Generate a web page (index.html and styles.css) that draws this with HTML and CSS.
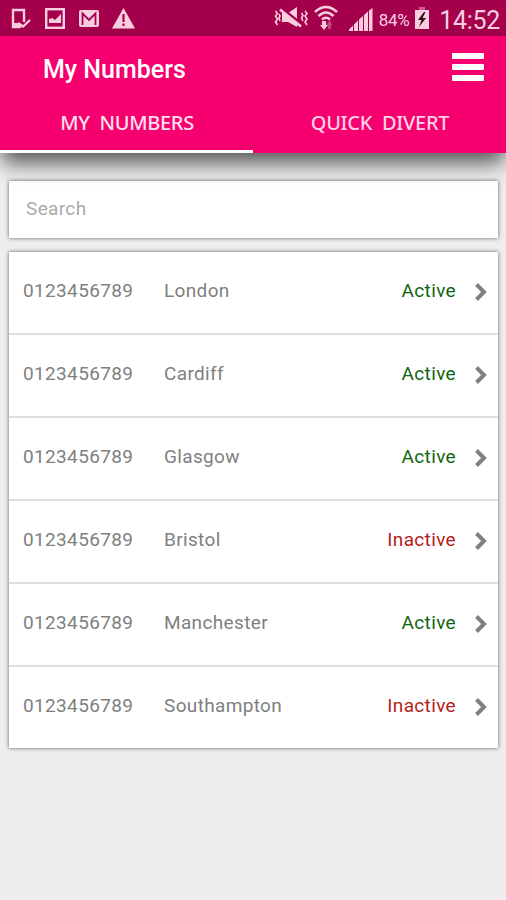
FILE: index.html
```
<!DOCTYPE html>
<html lang="en">
<head>
  <meta charset="UTF-8">
  <meta name="viewport" content="width=device-width, initial-scale=1">
  <title>My Numbers</title>
  <link rel="stylesheet" href="styles.css">
</head>
<body>
  <div class="statusbar">
    <div class="notifications">
      <svg width="22" height="22" viewBox="0 0 22 22">
        <path d="M10 19H3V2h11v12" fill="none" stroke="currentColor" stroke-width="2.400"/>
        <path d="M3 15h5l3 2v3H3z" fill="currentColor"/>
        <path d="M8 15l5 3.500 7-6.500" fill="none" stroke="currentColor" stroke-width="2.2"/>
      </svg>
      <svg width="22" height="22" viewBox="0 0 22 22">
        <rect x="2.2" y="1.2" width="17.6" height="18.6" fill="none" stroke="currentColor" stroke-width="2.4"/>
        <path d="M5 15v-4l3-1 3 2 6-6v9z" fill="currentColor"/>
      </svg>
      <svg width="22" height="22" viewBox="0 0 22 22">
        <rect x="1" y="2" width="20" height="17" rx="2" fill="currentColor"/>
        <path d="M4.500 17V5.500L11 12l6.500-6.500V17" fill="none" stroke="#a80050" stroke-width="1.800"/>
      </svg>
      <svg width="24" height="22" viewBox="0 0 24 22">
        <path d="M11.500 0L23 20.500H0z" fill="currentColor"/>
        <path d="M11.500 6v8M11.500 15.500V18" stroke="#a80050" stroke-width="2.200"/>
      </svg>
    </div>
    <div class="system">
      <svg class="mute" width="34" height="22" viewBox="0 0 34 22">
        <path d="M8 6h6l9-6v20l-9-5H8z" fill="currentColor"/>
        <path d="M7 1l21 17" stroke="#a5004c" stroke-width="3.500"/>
        <path d="M6 2.500l21 17" stroke="currentColor" stroke-width="2.600"/>
        <path d="M1.500 4l2 2.500-2 2.500 2 3-2 3 2 3M5 7l1 2-1 2 1 3M31 4l2 2.500-2 2.500 2 3-2 3 2 3M27.500 6l1.500 2.500-1.500 2.500 1.500 3" fill="none" stroke="currentColor" stroke-width="1.600"/>
      </svg>
      <svg class="wifi" width="24" height="26" viewBox="0 0 24 26">
        <path d="M1 7q11-10 22 0M4.500 11q7.500-7 15 0M8 14.500q4-3.500 8 0" fill="none" stroke="currentColor" stroke-width="2.600"/>
        <path d="M8 16h4v4h2l-4 5-4-5h2z" fill="currentColor"/>
        <path d="M14 24v-4h-1.500l3-5 3 5H17v4z" fill="currentColor" opacity=".35"/>
      </svg>
      <svg class="signal" width="24" height="23" viewBox="0 0 24 23">
        <path d="M0 21.500l4-4V23H0zM5 16.500L9 12.500V23H5zM10 11.500L14 8v15h-4zM15 7L19 3.500V23h-4zM20 2.500L23.500 0v23H20z" fill="currentColor"/>
      </svg>
      <span class="percent">84%</span>
      <svg class="battery" width="16" height="23" viewBox="0 0 16 23">
        <path d="M5 0h6v3H5z" fill="currentColor" opacity=".45"/>
        <path d="M1 3h14v19H1z" fill="currentColor"/>
        <path d="M10 5l-6 8h3.500L5 20l7-9H8.500l3-6z" fill="#2c101b"/>
      </svg>
      <span class="clock">14:52</span>
    </div>
  </div>

  <header class="header">
    <div class="titlebar">
      <h1>My Numbers</h1>
      <button class="menu" aria-label="Menu">
        <span></span>
        <span></span>
        <span></span>
      </button>
    </div>
    <nav class="tabs">
      <a class="tab active">MY NUMBERS</a>
      <a class="tab">QUICK DIVERT</a>
    </nav>
  </header>

  <main>
    <input class="search" type="text" placeholder="Search">

    <ul class="numbers">
      <li>
        <span class="number">0123456789</span>
        <span class="city">London</span>
        <span class="status on">Active</span>
        <svg class="arrow" width="13" height="20" viewBox="0 0 13 20"><path d="M2.500 2.500L10 10l-7.500 7.500"/></svg>
      </li>
      <li>
        <span class="number">0123456789</span>
        <span class="city">Cardiff</span>
        <span class="status on">Active</span>
        <svg class="arrow" width="13" height="20" viewBox="0 0 13 20"><path d="M2.500 2.500L10 10l-7.500 7.500"/></svg>
      </li>
      <li>
        <span class="number">0123456789</span>
        <span class="city">Glasgow</span>
        <span class="status on">Active</span>
        <svg class="arrow" width="13" height="20" viewBox="0 0 13 20"><path d="M2.500 2.500L10 10l-7.500 7.500"/></svg>
      </li>
      <li>
        <span class="number">0123456789</span>
        <span class="city">Bristol</span>
        <span class="status off">Inactive</span>
        <svg class="arrow" width="13" height="20" viewBox="0 0 13 20"><path d="M2.500 2.500L10 10l-7.500 7.500"/></svg>
      </li>
      <li>
        <span class="number">0123456789</span>
        <span class="city">Manchester</span>
        <span class="status on">Active</span>
        <svg class="arrow" width="13" height="20" viewBox="0 0 13 20"><path d="M2.500 2.500L10 10l-7.500 7.500"/></svg>
      </li>
      <li>
        <span class="number">0123456789</span>
        <span class="city">Southampton</span>
        <span class="status off">Inactive</span>
        <svg class="arrow" width="13" height="20" viewBox="0 0 13 20"><path d="M2.500 2.500L10 10l-7.500 7.500"/></svg>
      </li>
    </ul>
  </main>
</body>
</html>
```

FILE: styles.css
```
* {
  box-sizing: border-box;
}

body {
  margin: 0;
  min-height: 900px;
  background: #eee;
  font-family: Roboto, sans-serif;
  font-size: 19px;
  letter-spacing: 0.35px;
  color: #808080;
}

svg {
  display: block;
  flex: none;
}

/* status bar */
.statusbar {
  display: flex;
  justify-content: space-between;
  height: 36px;
  padding: 0 6px 0 10px;
  background: #a5004c;
  color: #f9cfe0;
}

.notifications {
  display: flex;
  align-items: center;
  gap: 12px;
  padding-top: 2px;
}

.system {
  display: flex;
  align-items: center;
}

.wifi {
  margin-left: 6px;
}

.signal {
  margin: 2px 0 0 11px;
}

.percent {
  margin: 3px 0 0 6px;
  font-size: 17px;
  letter-spacing: -0.4px;
}

.battery {
  margin: 1px 0 0 5px;
}

.clock {
  margin: 4px 0 0 9px;
  font-size: 25px;
  letter-spacing: -0.3px;
}

/* header */
.header {
  position: relative;
  height: 117px;
  background: #f60070;
  color: #fff;
  box-shadow: 0 12px 20px -2px rgba(0, 0, 0, 0.65);
}

.titlebar {
  display: flex;
  justify-content: space-between;
  align-items: center;
  height: 66px;
  padding: 0 22px 0 43px;
}

h1 {
  margin: 0;
  font-size: 25px;
  font-weight: 500;
  letter-spacing: 0;
}

.menu {
  display: flex;
  flex-direction: column;
  gap: 5px;
  margin-top: -5px;
  padding: 0;
  border: 0;
  background: none;
}

.menu span {
  width: 32px;
  height: 6px;
  border-radius: 1px;
  background: #fff;
}

.tabs {
  display: flex;
  height: 51px;
}

.tab {
  flex: 1;
  padding: 7px 0 0 1px;
  border-bottom: 3px solid transparent;
  font-family: "Noto Sans", sans-serif;
  font-size: 20px;
  font-weight: 500;
  line-height: 28px;
  letter-spacing: -0.3px;
  word-spacing: 5px;
  text-align: center;
  color: #ffd0e4;
}

.tab.active {
  border-color: #fff;
  color: #ffe0ed;
}

/* content */
main {
  padding: 28px 8px 0 9px;
}

.search {
  display: block;
  width: 100%;
  height: 57px;
  padding: 0 17px 2px;
  border: 0;
  background: #fff;
  box-shadow: 0 0 4px rgba(0, 0, 0, 0.6);
  font: inherit;
  letter-spacing: inherit;
}

.search::placeholder {
  color: #aaa;
}

.numbers {
  margin: 14px 0 0;
  padding: 0;
  list-style: none;
  background: #fff;
  box-shadow: 0 0 4px rgba(0, 0, 0, 0.6);
}

.numbers li {
  display: flex;
  align-items: center;
  height: 83px;
  padding: 0 11px 4px 14px;
  border-bottom: 2px solid #dedede;
}

.numbers li:last-child {
  height: 81px;
  padding-bottom: 4px;
  border-bottom: 0;
}

.number {
  width: 141px;
}

.city {
  flex: 1;
}

.on {
  color: #126412;
}

.off {
  color: #b71c1c;
}

.arrow {
  margin: 2px 0 0 18px;
}

.arrow path {
  fill: none;
  stroke: #808080;
  stroke-width: 4;
}
```
